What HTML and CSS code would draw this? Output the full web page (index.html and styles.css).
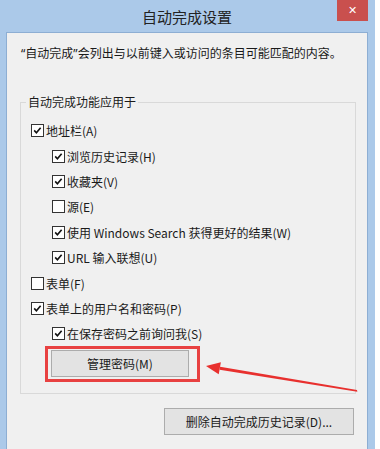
FILE: index.html
```html
<!DOCTYPE html>
<html lang="zh-CN">
<head>
<meta charset="utf-8">
<title>自动完成设置</title>
<link rel="stylesheet" href="styles.css">
</head>
<body>
<div class="window">
  <div class="titlebar">
    <span></span>
    <span class="title">自动完成设置</span>
    <span class="close">✕</span>
  </div>
  <div class="content">
    <p class="desc"><span class="q">“</span>自动完成<span class="q">”</span>会列出与以前键入或访问的条目可能匹配的内容。</p>
    <fieldset class="group">
      <legend>自动完成功能应用于</legend>
      <div class="row"><span class="cb on"><svg viewBox="0 0 13 13"><path d="M2.6 6.4 L5.2 9.2 L10.2 3.2"/></svg></span>地址栏(A)</div>
      <div class="row sub"><span class="cb on"><svg viewBox="0 0 13 13"><path d="M2.6 6.4 L5.2 9.2 L10.2 3.2"/></svg></span>浏览历史记录(H)</div>
      <div class="row sub"><span class="cb on"><svg viewBox="0 0 13 13"><path d="M2.6 6.4 L5.2 9.2 L10.2 3.2"/></svg></span>收藏夹(V)</div>
      <div class="row sub"><span class="cb"></span>源(E)</div>
      <div class="row sub"><span class="cb on"><svg viewBox="0 0 13 13"><path d="M2.6 6.4 L5.2 9.2 L10.2 3.2"/></svg></span>使用 Windows Search 获得更好的结果(W)</div>
      <div class="row sub"><span class="cb on"><svg viewBox="0 0 13 13"><path d="M2.6 6.4 L5.2 9.2 L10.2 3.2"/></svg></span>URL 输入联想(U)</div>
      <div class="row"><span class="cb"></span>表单(F)</div>
      <div class="row"><span class="cb on"><svg viewBox="0 0 13 13"><path d="M2.6 6.4 L5.2 9.2 L10.2 3.2"/></svg></span>表单上的用户名和密码(P)</div>
      <div class="row sub"><span class="cb on"><svg viewBox="0 0 13 13"><path d="M2.6 6.4 L5.2 9.2 L10.2 3.2"/></svg></span>在保存密码之前询问我(S)</div>
      <div class="btnrow"><div class="highlight"><span class="btn manage">管理密码(M)</span></div></div>
    </fieldset>
    <div class="footer"><span class="btn delete">删除自动完成历史记录(D)...</span></div>
  </div>
  <svg class="arrow" viewBox="0 0 380 449">
    <polygon points="220.1,366.8 219.6,369.8 357.3,391.8 357.0,390.0"/>
    <polygon points="206,366 220.9,362.3 218.7,374.2"/>
  </svg>
</div>
</body>
</html>
```

FILE: styles.css
```css
html, body {
  margin: 0;
  padding: 0;
  background: #ffffff;
}

body {
  font-family: "Noto Sans CJK SC", "Noto Sans", sans-serif;
  font-size: 12px;
  color: #1a1a1a;
}

.window {
  position: relative;
  width: 362px;
  height: 449px;
  padding: 0 7px 0 6px;
  background: #abc9e9;
  display: flex;
  flex-direction: column;
  overflow: hidden;
}

.titlebar {
  height: 32px;
  display: grid;
  grid-template-columns: 1fr auto 1fr;
  align-items: start;
}

.title {
  font-size: 15px;
  line-height: 18px;
  margin-top: 8px;
  color: #222;
}

.close {
  justify-self: end;
  width: 31px;
  height: 21px;
  background: #c9504e;
  color: #fff;
  font-size: 11px;
  line-height: 21px;
  text-align: center;
  font-family: "DejaVu Sans", sans-serif;
}

.content {
  flex: 1;
  background: #f0f0f0;
  border: 1px solid #8daed3;
  border-bottom: none;
  display: flex;
  flex-direction: column;
}

.desc {
  margin: 12px 0 0 14px;
  line-height: 16px;
  white-space: nowrap;
}

.q {
  font-family: "Noto Sans", sans-serif;
}

.group {
  margin: 32px 11px 0 13px;
  padding: 8px 0 11px 10px;
  border: 1px solid #d9d9d9;
  min-width: 0;
}

.group legend {
  margin-left: -5px;
  padding: 0 2px;
  line-height: 16px;
}

.row {
  height: 25.4px;
  display: flex;
  align-items: center;
  white-space: nowrap;
}

.row.sub {
  padding-left: 21px;
}

.cb {
  width: 11px;
  height: 11px;
  border: 1px solid #333;
  background: #fff;
  margin-right: 2px;
  flex: none;
  display: flex;
}

.cb svg {
  width: 11px;
  height: 11px;
}

.cb svg path {
  fill: none;
  stroke: #111;
  stroke-width: 1.9;
}

.btnrow {
  display: flex;
  padding-left: 14px;
  margin-top: -1px;
}

.highlight {
  box-sizing: border-box;
  width: 155px;
  height: 36px;
  padding: 1px 6px 0 3px;
  border: 3px solid #e84141;
  display: flex;
}

.btn {
  box-sizing: border-box;
  display: flex;
  align-items: center;
  justify-content: center;
  color: #1a1a1a;
  background: #e3e3e3;
  border: 1px solid #acacac;
  height: 27px;
  white-space: nowrap;
}

.manage {
  width: 138px;
  flex: none;
}

.footer {
  display: flex;
  justify-content: flex-end;
  padding: 14px 13px 0 0;
}

.delete {
  width: 190px;
}

.arrow {
  position: absolute;
  left: 0;
  top: 0;
  width: 380px;
  height: 449px;
  pointer-events: none;
}

.arrow polygon {
  fill: #e8302e;
}
```
